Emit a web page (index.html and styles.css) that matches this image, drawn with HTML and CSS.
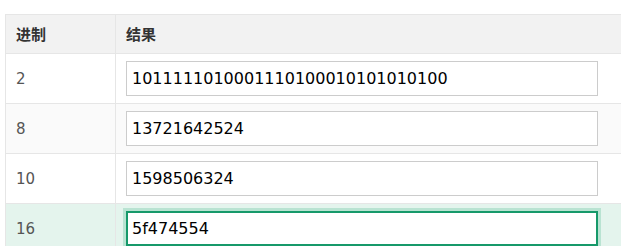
FILE: index.html
```html
<!DOCTYPE html>
<html lang="zh-CN">
<head>
<meta charset="utf-8">
<title>进制转换</title>
<link rel="stylesheet" href="styles.css">
</head>
<body>
<div class="wrap">
  <table class="radix">
    <thead>
      <tr><th class="c1">进制</th><th class="c2">结果</th></tr>
    </thead>
    <tbody>
      <tr><td class="c1">2</td><td class="c2"><input class="field" type="text" value="1011111010001110100010101010100"></td></tr>
      <tr class="alt"><td class="c1">8</td><td class="c2"><input class="field" type="text" value="13721642524"></td></tr>
      <tr><td class="c1">10</td><td class="c2"><input class="field" type="text" value="1598506324"></td></tr>
      <tr class="active"><td class="c1">16</td><td class="c2"><input class="field focus" type="text" value="5f474554" autofocus></td></tr>
    </tbody>
  </table>
</div>
</body>
</html>
```
FILE: styles.css
```css
html, body {
  margin: 0;
  padding: 0;
  background: #fff;
  overflow: hidden;
}
.wrap {
  padding: 15px 0 0 5px;
  width: 700px;
}
.radix {
  border-collapse: collapse;
  width: 660px;
  border: 1px solid #e6e6e6;
  font-family: "DejaVu Sans", "Noto Sans CJK SC", sans-serif;
}
.radix th {
  background: #f2f2f2;
  color: #333;
  font-family: "Noto Sans CJK SC", sans-serif;
  font-weight: bold;
  font-size: 15px;
  line-height: 20px;
  height: 39px;
  box-sizing: border-box;
  padding: 0 10px;
  text-align: left;
  border: 1px solid #e6e6e6;
}
.radix td {
  border: 1px solid #e6e6e6;
  padding: 7px 10px;
  height: 49px;
  box-sizing: border-box;
  font-size: 15px;
  color: #555;
}
.radix .c1 {
  width: 110px;
  box-sizing: border-box;
}
.radix tr.alt td {
  background: #fafafa;
}
.radix tr.active td {
  background: #e4f4ed;
}
.field {
  display: block;
  box-sizing: border-box;
  width: 472px;
  height: 35px;
  margin: 0;
  padding: 0 5px;
  border: 1px solid #cccccc;
  background: #fff;
  font-family: "DejaVu Sans", sans-serif;
  font-size: 16px;
  color: #000;
  outline: none;
}
.field.focus {
  border: 2px solid #16996a;
  padding: 0 4px;
  box-shadow: 0 0 0 3px #b9e3d2;
  caret-color: #000;
}
```
